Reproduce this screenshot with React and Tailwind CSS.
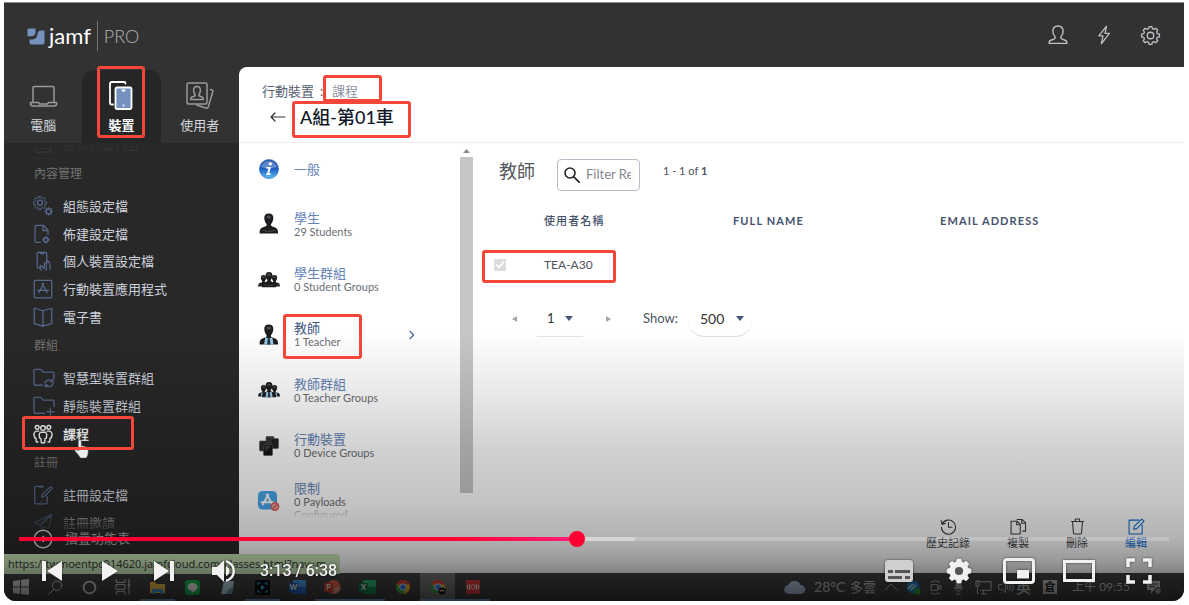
import React from "react";

const font = "font-[Lato,'Noto_Sans_CJK_TC',sans-serif]";

function Svg({ size = 20, w, h, box = "0 0 24 24", children, className = "", ...rest }) {
  return (
    <svg
      width={w || size}
      height={h || size}
      viewBox={box}
      fill="none"
      stroke="currentColor"
      strokeWidth="1.5"
      strokeLinecap="round"
      strokeLinejoin="round"
      aria-hidden="true"
      className={`shrink-0 ${className}`}
      {...rest}
    >
      {children}
    </svg>
  );
}

const gearPath =
  "M10.4 2.5h3.2l.5 2.4 1.9.8 2.1-1.3 2.2 2.2-1.3 2.1.8 1.9 2.4.5v3.2l-2.4.5-.8 1.9 1.3 2.1-2.2 2.2-2.1-1.3-1.9.8-.5 2.4h-3.2l-.5-2.4-1.9-.8-2.1 1.3-2.2-2.2L5 16.7l-.8-1.9-2.4-.5v-3.2l2.4-.5.8-1.9-1.3-2.1 2.2-2.2L8 5.7l1.9-.8z";

/* ---------- header icons ---------- */

const UserOutline = () => (
  <Svg size={22}>
    <path d="M8.6 13.6C7.2 12.3 6.4 10.4 6.4 8c0-3.4 2.200-5.800 5.600-5.800S17.600 4.600 17.600 8c0 2.400-.8 4.300-2.200 5.600-.6.700-.4 2 .6 2.500l4.300 1.900c.9.400 1.400 1.300 1.400 2.400v.8H2.300v-.8c0-1.100.5-2 1.400-2.400L8 16.100c1-.5 1.200-1.800.6-2.500z" />
  </Svg>
);
const Bolt = () => (
  <Svg size={20}>
    <path d="M15 1.500 5.800 13h5L8.800 22.500 18.500 10h-5.300z" />
  </Svg>
);
const Gear = ({ size = 21 }) => (
  <Svg size={size}>
    <path d={gearPath} transform="translate(0 -0.700)" />
    <circle cx="12" cy="12" r="3.700" />
  </Svg>
);

/* ---------- sidebar icons ---------- */

const Laptop = () => (
  <Svg w={29} h={24} box="0 0 29 24">
    <path d="M4 18V3.500Q4 2.500 5 2.500h19q1 0 1 1V18M1.500 18.500h8l1 1.500h8l1-1.500h8v1q0 2.500-2.500 2.500h-21q-2.500 0-2.500-2.500z" />
  </Svg>
);
const Devices = () => (
  <Svg w={24} h={30} box="0 0 24 30" strokeWidth="1.800">
    <path d="M4 23.500H2.500q-1.500 0-1.500-1.500V3q0-2 2-2h12q1.500 0 1.500 1.500" />
    <rect x="6.500" y="6.500" width="16" height="21.500" rx="1.500" fill="#7592bf" />
    <path d="M13.500 9.500h2M14.500 24.500v.1" />
  </Svg>
);
const Contacts = () => (
  <Svg w={28} h={28} box="0 0 28 28">
    <rect x="1" y="1" width="20" height="21" rx="1.500" />
    <path d="M9 12.500C7.800 11 7.600 9.500 7.600 8.300 7.600 6 9 4.500 11 4.500s3.400 1.500 3.400 3.800c0 1.200-.2 2.700-1.400 4.200v1.300l3.500 1.400q.8.500.8 2.300H4.700q0-1.800.8-2.300L9 13.800zM24.500 7.500l2 .8q.6.400.4 1.200L22 25.500q-.5 1-1.500.7L10.500 23" />
  </Svg>
);
const Gears = () => (
  <Svg size={20}>
    <path d={gearPath} transform="translate(-1 -1.500) scale(.78)" />
    <circle cx="8.400" cy="8" r="3" />
    <circle cx="18.800" cy="18.500" r="3" />
    <path d="M18.800 14v1.500M18.800 21.500V23M14.300 18.500h1.500M21.800 18.500h1.500M15.600 15.300l1.100 1.100M20.900 20.600l1.100 1.100M22 15.300l-1.100 1.100M16.700 20.600l-1.100 1.100" />
  </Svg>
);
const FileGear = () => (
  <Svg size={20}>
    <path d="M9 22H4Q2.500 22 2.500 20.500V3Q2.500 1.500 4 1.500h8.500L18 7.500V13M12 2v6h6" />
    <circle cx="15.500" cy="19" r="2.600" strokeWidth="2" />
    <path d="M15.500 15v1.400M15.500 21.600V23M11.500 19h1.400M18.100 19h1.400" />
  </Svg>
);
const PhoneHand = () => (
  <Svg size={20}>
    <path d="M9 20.500H6.500Q5 20.500 5 19V3q0-1.500 1.500-1.500h8.500q1.500 0 1.500 1.500v12M9 1.500v1.500h4V1.500M10 23l-1.500-4q-.3-1.500 1-1.500 1 0 2 2l2 1.500V15q1-2 2.500 0v8M16.500 10.500q3.500 3 4 6V22" />
  </Svg>
);
const AppBox = () => (
  <Svg size={20}>
    <rect x="1.500" y="1.500" width="21" height="21" rx="1.500" />
    <path d="m12.800 5.500-5.800 11M11 5.500l6 11M5.500 13.500h13" />
  </Svg>
);
const Book = () => (
  <Svg size={20}>
    <path d="M12 4.500 1.500 1.500v18.500L12 23l10.500-3V1.500zM12 4.500V23" />
  </Svg>
);
const FolderSync = () => (
  <Svg w={22} h={20} box="0 0 24 22">
    <path d="M10.500 19H2.500Q1 19 1 17.500V2.500Q1 1.500 2 1.500h6.500l2.500 3h10.500Q23 4.500 23 6v5.500M13 16.500q1-3.500 4.500-3.500 2 0 3.500 1.500M22 16.500q-.5 4-4.500 4-2 0-3.500-1.500M21.500 12.500v2.500H19M13.500 21v-2.500H16" />
  </Svg>
);
const FolderPlus = () => (
  <Svg w={22} h={20} box="0 0 24 22">
    <path d="M12.500 19H2.500Q1 19 1 17.500V2.500Q1 1.500 2 1.500h6.500l2.500 3h10.500Q23 4.500 23 6v5.500M19 13.500v7.500M15.300 17.300h7.500" />
  </Svg>
);
const Class = () => (
  <Svg w={20} h={20} strokeWidth="1.700">
    <circle cx="5" cy="4" r="2.300" />
    <circle cx="12" cy="4.800" r="2.800" />
    <circle cx="19" cy="4" r="2.300" />
    <path d="M7 8.500H4Q1.500 9 1 12l1 4.500 1.500.5.500 4.500h2M17 8.500h3q2.500.5 3 3.500l-1 4.500-1.500.5-.5 4.500h-2M9.500 9.800h5q2 .7 2 3.200l-.5 4-1.500.5-.5 5h-4l-.5-5L8 17l-.5-4q0-2.500 2-3.200z" />
  </Svg>
);
const TabletPen = () => (
  <Svg size={20}>
    <path d="M12.500 1.500H3.500Q2 1.500 2 3v18q0 1.500 1.500 1.500h12q1.500 0 1.500-1.500v-7M7.500 1.500v1h4v-1M9.500 19.500v.1M10.500 14.500l1-3.500L20.500 2.500q1.200-.6 2 .2.800.9.100 2L13.800 13.500z" />
  </Svg>
);
const Plane = () => (
  <Svg size={20}>
    <path d="M22.500 2 1.500 11.500l6 3zM22.500 2 9 15.500l9.500 3.500zM9 15.500v6l3.500-4.500" />
  </Svg>
);
const Collapse = () => (
  <Svg size={20} strokeWidth="1.800">
    <circle cx="12" cy="12" r="10.500" />
    <path d="m12.500 9-3 3 3 3" />
  </Svg>
);
const Tray = () => (
  <Svg size={20}>
    <path d="M3 12v7q0 1.500 1.500 1.500h15q1.500 0 1.500-1.500v-7M6 16h12" />
  </Svg>
);

/* ---------- class payload icons ---------- */

function Bust({ x = 0, y = 0, s = 1, tie }) {
  return (
    <g transform={`translate(${x} ${y}) scale(${s})`} stroke="none">
      <path d="M7.300 0c3.200 0 4.700 2 4.500 4.800-.1 2.500-1.200 4.700-2.300 5.700V12q.5 1 4.300 2 2.500.8 2.700 4v2H-1.900v-2q.2-3.200 2.700-4 3.800-1 4.300-2v-1.500C4 9.500 2.900 7.300 2.800 4.800 2.600 2 4.100 0 7.300 0z" fill="#1b1c1e" />
      <path d="M4.800 3Q7.300 1 9.800 3L9 5H5.600z" fill="#4a4c50" />
      {tie && <path d="m3.800 12.800 3.500 1.200 3.500-1.200L12 20H2.600z" fill="#9cc9e6" />}
      {tie && <path d="M6.300 13.800h2l.8 6.200H5.500z" fill="#22384d" />}
      {!tie && <path d="M1 17q6.300 2 12.600 0" stroke="#55575a" strokeWidth=".8" fill="none" />}
    </g>
  );
}
const InfoBall = () => (
  <Svg size={20} stroke="none">
    <defs>
      <linearGradient id="ball" x1="0" y1="0" x2="0" y2="1">
        <stop offset="0" stopColor="#2c55a8" />
        <stop offset=".5" stopColor="#1c5fc4" />
        <stop offset="1" stopColor="#62c3f7" />
      </linearGradient>
    </defs>
    <circle cx="12" cy="12" r="11.500" fill="url(#ball)" stroke="#3c6bb5" strokeWidth=".8" />
    <path d="M2.500 9.500a10 10 0 0 1 19 0q-9.500 3.500-19 0z" fill="#fff" opacity=".28" />
    <circle cx="13.600" cy="5.800" r="2" fill="#fff" />
    <path d="M9 9.500h5.300l-2 8h1.900l-.5 1.800H8.300l.5-1.800h.9l1.500-6.200H8.500z" fill="#fff" />
  </Svg>
);
const OneBust = ({ tie }) => (
  <Svg w={20} h={22} box="0 0 20 22">
    <Bust x={2.500} y={0.500} tie={tie} />
  </Svg>
);
const ThreeBusts = ({ tie }) => (
  <Svg w={22} h={18} box="0 0 22 18">
    <Bust x={1.300} y={4} s={0.580} tie={tie} />
    <Bust x={12.300} y={4} s={0.580} tie={tie} />
    <Bust x={5.500} y={1} s={0.760} tie={tie} />
  </Svg>
);
const Tablets = () => (
  <Svg w={20} h={20} box="0 0 20 20" strokeWidth=".6" stroke="#555">
    <rect x="7" y=".5" width="8" height="10" rx="1" fill="#333436" />
    <rect x="12" y="2.500" width="7.500" height="10" rx="1" fill="#222325" />
    <rect x=".5" y="5" width="8" height="10" rx="1" fill="#2b2c2e" />
    <rect x="4.500" y="8.500" width="9" height="11" rx="1" fill="#141517" />
    <path d="M5.500 9.500h7l-6 6.500z" fill="#3c3d40" stroke="none" />
  </Svg>
);
const Restrict = () => (
  <Svg w={22} h={20} box="0 0 22 20">
    <rect x="0" y="0" width="19" height="18.500" rx="4.500" fill="#46a6ec" stroke="none" />
    <path d="m10.300 3.500-5.500 10M8.700 3.500l5.800 10M3.500 11.200h12" stroke="#fff" strokeWidth="1.900" />
    <circle cx="17" cy="15.500" r="3.700" fill="#e9a0a0" stroke="#d95a5a" strokeWidth="1.500" />
    <path d="m14.800 17.500 4.400-4" stroke="#d95a5a" strokeWidth="1.400" />
  </Svg>
);

/* ---------- footer action icons ---------- */

const History = () => (
  <Svg size={17}>
    <path d="M3 8.500A10 10 0 1 1 2 13M1.500 3.500 2.800 9l5-1.500M12 6.500V13h5" />
  </Svg>
);
const Copy = () => (
  <Svg size={17}>
    <path d="M1.500 4.500h8.500l4.500 4.500v13.500h-13zM9.500 5v4.500H14M10 2h7l5 5v11.500h-4M16.500 2.500v5H22" />
  </Svg>
);
const Trash = () => (
  <Svg size={17}>
    <path d="M3.500 5h17M9 5V1.500h6V5M5 5l1.300 16.500q.2 1 1.200 1h9q1 0 1.200-1L19 5" />
  </Svg>
);
const Edit = () => (
  <Svg size={17}>
    <path d="M15 3H1.500v19.500H20V10M8 16l1-4.500L19.500 1.500l3.200 3L12.500 15z" />
  </Svg>
);

/* ---------- data ---------- */

const tabs = [
  { label: "電腦", icon: Laptop },
  { label: "裝置", icon: Devices, active: true },
  { label: "使用者", icon: Contacts },
];

const contentLinks = [
  { label: "組態設定檔", icon: Gears },
  { label: "佈建設定檔", icon: FileGear },
  { label: "個人裝置設定檔", icon: PhoneHand },
  { label: "行動裝置應用程式", icon: AppBox },
  { label: "電子書", icon: Book },
];
const groupLinks = [
  { label: "智慧型裝置群組", icon: FolderSync },
  { label: "靜態裝置群組", icon: FolderPlus },
  { label: "課程", icon: Class, active: true },
];

const payloads = [
  { label: "一般", icon: <InfoBall /> },
  { label: "學生", sub: "29 Students", icon: <OneBust /> },
  { label: "學生群組", sub: "0 Student Groups", icon: <ThreeBusts /> },
  { label: "教師", sub: "1 Teacher", icon: <OneBust tie />, active: true },
  { label: "教師群組", sub: "0 Teacher Groups", icon: <ThreeBusts tie /> },
  { label: "行動裝置", sub: "0 Device Groups", icon: <Tablets /> },
  { label: "限制", sub: "0 Payloads", more: "Configured", icon: <Restrict /> },
];

/* ---------- page parts ---------- */

function Header() {
  return (
    <header className="flex h-[65px] shrink-0 items-center justify-between border-t border-[#8a8a8a] bg-[#323232] pr-[23px] pl-[23px] text-[#bcbfc4]">
      <a href="#home" className="flex items-center pt-0.5 text-white">
        <svg width="18" height="17" viewBox="0 0 18 17" aria-hidden="true">
          <path d="M.500 2Q.500.500 2 .500h6.500v3.500q0 4-4 4.300H.500z" fill="#7592bf" />
          <path d="M17.500 2.500v12q0 2-2 2h-11Q2.500 16.500 2.500 14v-2.500H5q5-.3 5.500-5.500Q11 2.500 14 2.500z" fill="#7592bf" />
        </svg>
        <span className="ml-1 text-[22px] leading-7">jamf</span>
        <span className="mx-1.5 h-[30px] w-px bg-[#777]" />
        <span className="text-lg leading-7 font-light text-[#b4b4b4]">PRO</span>
      </a>
      <nav aria-label="帳號" className="flex items-center">
        <button aria-label="使用者" className="flex w-[46px] justify-center"><UserOutline /></button>
        <button aria-label="通知" className="flex w-[46px] justify-center"><Bolt /></button>
        <button aria-label="設定" className="ml-3.5 flex w-5 justify-end"><Gear /></button>
      </nav>
    </header>
  );
}

function SideLinks({ items }) {
  return items.map(({ label, icon: Icon, active }) => (
    <a
      key={label}
      href="#section"
      className={`flex min-h-0 flex-1 items-center gap-2.5 text-[13px] leading-5 ${active ? "font-bold text-white" : "text-[#cdd2dd]"}`}
    >
      <span className={`flex w-5 justify-start ${active ? "text-white" : "text-[#56688c]"}`}>
        <Icon />
      </span>
      {label}
    </a>
  ));
}

function SideHeading({ children }) {
  return <h3 className="flex h-[33px] items-center pb-1 pl-px text-[12px] text-[#737373]">{children}</h3>;
}

function Sidebar() {
  return (
    <aside className="flex w-[235px] shrink-0 flex-col bg-[#282828]">
      <nav aria-label="主要" className="flex h-[76px] bg-[#323232] pt-[3px]">
        {tabs.map(({ label, icon: Icon, active }) => (
          <a
            key={label}
            href="#tab"
            className={`flex flex-1 flex-col items-center pt-1.5 text-[13px] leading-5 ${active ? "rounded-t-xl bg-[#262626] font-bold text-white" : "text-[#d3d6dc]"}`}
          >
            <span className={`flex h-[39px] items-center ${active ? "text-white" : "text-[#9a9a9a]"}`}>
              <Icon />
            </span>
            {label}
          </a>
        ))}
      </nav>
      <nav aria-label="裝置" className="h-[386px] grow overflow-hidden px-[29px]">
        <div className="-mt-3 flex h-7 border-b border-[#2d2d2d] text-[#454545] [mask-image:linear-gradient(transparent_40%,black)]">
          <a href="#search" className="flex items-center gap-2.5 text-[13px]">
            <Tray />
            搜尋大量內容
          </a>
        </div>
        <SideHeading>內容管理</SideHeading>
        <div className="flex h-[139px] flex-col"><SideLinks items={contentLinks} /></div>
        <SideHeading>群組</SideHeading>
        <div className="flex h-[84px] flex-col"><SideLinks items={groupLinks} /></div>
        <SideHeading>註冊</SideHeading>
        <div className="flex h-14 flex-col">
          <SideLinks items={[{ label: "註冊設定檔", icon: TabletPen }]} />
          <a
            href="#invite"
            className="flex min-h-0 flex-1 items-center gap-2.5 text-[13px] leading-5 text-[#d3d8e2] [mask-image:linear-gradient(rgba(0,0,0,.7)_20%,rgba(0,0,0,.2)_75%)]"
          >
            <span className="text-[#56688c]"><Plane /></span>
            註冊邀請
          </a>
        </div>
      </nav>
      <button className="mb-6 flex h-5 shrink-0 items-center gap-3 px-[29px] text-[13px] text-[#a8a8a8]">
        <span className="text-[#d0d0d0]"><Collapse /></span>
        摺疊功能表
      </button>
    </aside>
  );
}

function PayloadList() {
  return (
    <div className="flex w-[234px] shrink-0">
      <ul className="-mt-0.5 flex h-[388px] flex-1 flex-col">
        {payloads.map(({ label, sub, more, icon, active }) => (
          <li key={label} className="min-h-0 flex-1">
            <a href="#payload" className="flex h-full items-center pr-[43px] pl-[18px]">
              <span className="flex w-6 shrink-0 justify-center">{icon}</span>
              <span className="ml-[13px] flex flex-1 flex-col">
                <span className={`text-[13px] leading-[14px] ${active ? "text-[#3d5480]" : "text-[#6583b5]"}`}>{label}</span>
                {sub && <span className="text-[11px] leading-[13px] text-[#6a6e73]">{sub}</span>}
                {more && (
                  <span className="text-[11px] leading-[13px] text-[#6a6e73] [mask-image:linear-gradient(rgba(0,0,0,.7),transparent_80%)]">{more}</span>
                )}
              </span>
              {active && (
                <Svg size={10} className="text-[#4d628c]" strokeWidth="2.800">
                  <path d="m7 3 9 9-9 9" />
                </Svg>
              )}
            </a>
          </li>
        ))}
      </ul>
      <div className="flex w-[13px] flex-col items-center pt-1.5">
        <svg width="7" height="4" viewBox="0 0 7 4" aria-hidden="true"><path d="M0 4 3.500 0 7 4z" fill="#8b8b8b" /></svg>
        <span className="mt-1 h-[336px] w-full bg-[#c6c6c6]" />
      </div>
    </div>
  );
}

const Caret = () => (
  <svg width="8" height="5" viewBox="0 0 8 5" className="pointer-events-none -ml-2 shrink-0" aria-hidden="true">
    <path d="M0 0h8L4 5z" fill="#45577c" />
  </svg>
);

function Detail() {
  return (
    <section className="min-w-0 flex-1 pt-4 pl-2 text-[#4d525b]">
      <div className="flex items-start pl-[18px]">
        <h2 className="text-[18px] leading-6 text-[#55585d]">教師</h2>
        <label className="ml-[22px] flex h-8 w-[83px] items-center rounded border border-[#b9bcc9] px-1.5">
          <Svg size={16} className="text-[#222]" strokeWidth="2.400">
            <circle cx="9" cy="9" r="7.500" />
            <path d="m14.500 14.500 8.500 8.500" />
          </Svg>
          <input
            aria-label="Filter Results"
            placeholder="Filter Results"
            className="mr-0.5 ml-1.5 w-0 min-w-0 flex-1 bg-transparent text-[13px] outline-none placeholder:text-[#85888e]"
          />
        </label>
        <span className="ml-[23px] text-[11px] leading-6">1 - 1 of <b>1</b></span>
      </div>
      <table className="mt-3.5 w-full table-fixed text-left">
        <thead>
          <tr className="h-8 text-[11px] tracking-widest text-[#45526e]">
            <th className="w-[63px]" aria-label="選取" />
            <th className="w-[189px] font-medium">使用者名稱</th>
            <th className="w-[207px]">FULL NAME</th>
            <th>EMAIL ADDRESS</th>
          </tr>
        </thead>
        <tbody>
          <tr className="h-14 text-[12px]">
            <td>
              <span className="relative ml-[13px] flex size-3">
                <input
                  type="checkbox"
                  defaultChecked
                  disabled
                  aria-label="TEA-A30"
                  className="size-3 appearance-none rounded-[1px] bg-[#dcdcdc]"
                />
                <Svg size={12} className="absolute inset-0 text-white" strokeWidth="3.500">
                  <path d="m5 12 5 5L19 6" />
                </Svg>
              </span>
            </td>
            <td>TEA-A30</td>
            <td />
            <td />
          </tr>
        </tbody>
      </table>
      <div className="mt-2 flex h-9 items-center pl-[31px] text-[12px]">
        <button aria-label="上一頁">
          <svg width="5" height="6" viewBox="0 0 5 6"><path d="M5 0v6L0 3z" fill="#a5a5a5" /></svg>
        </button>
        <span className="ml-5 flex h-full w-[46px] items-center border-b border-[#e4e4e8] pl-[10px]">
          <select aria-label="頁" className="w-[26px] appearance-none bg-transparent text-[13px] text-[#333] outline-none">
            <option>1</option>
          </select>
          <Caret />
        </span>
        <button aria-label="下一頁" className="ml-[23px]">
          <svg width="5" height="6" viewBox="0 0 5 6"><path d="M0 0v6l5-3z" fill="#a5a5a5" /></svg>
        </button>
        <label htmlFor="page-size" className="ml-8 text-[13px]">Show:</label>
        <span className="ml-2.5 flex h-full w-[64px] items-center rounded-2xl border-b border-[#dedee2] pl-3">
          <select id="page-size" className="w-11 appearance-none bg-transparent text-[14px] text-[#333] outline-none">
            <option>500</option>
          </select>
          <Caret />
        </span>
      </div>
    </section>
  );
}

function Main() {
  const actions = [
    ["歷史記錄", History],
    ["複製", Copy],
    ["刪除", Trash],
    ["編輯", Edit],
  ];
  return (
    <main className="flex min-w-0 flex-1 flex-col rounded-tl-lg bg-white">
      <div className="h-[76px] shrink-0 border-b border-[#ececf0] pt-[15px] pl-[23px]">
        <nav aria-label="路徑" className="flex text-[13px] leading-[18px] text-[#55606f]">
          <a href="#devices">行動裝置</a>
          <span className="w-[18px] pl-1.5">:</span>
          <a href="#classes" className="text-[#8b94a4]">課程</a>
        </nav>
        <div className="flex items-center pl-2">
          <button aria-label="返回" className="text-[#333]">
            <Svg w={16} h={10} box="0 0 16 10" strokeWidth="1.200">
              <path d="M15 5H1M5 1 1 5l4 4" />
            </Svg>
          </button>
          <h1 className="ml-3.5 text-[18px] leading-[34px] font-medium text-[#111827]">A組-第01車</h1>
        </div>
      </div>
      <div className="flex h-[375px] grow overflow-hidden">
        <PayloadList />
        <Detail />
      </div>
      <div className="flex shrink-0 justify-end gap-[37px] pr-[37px] pb-[22px]">
        {actions.map(([label, Icon]) => (
          <button
            key={label}
            className={`flex flex-col items-center text-[11px] leading-4 ${label === "編輯" ? "text-[#0b6fd6]" : "text-[#3c3c3c]"}`}
          >
            <Icon />
            {label}
          </button>
        ))}
      </div>
    </main>
  );
}

/* ---------- desktop task bar ---------- */

const OfficeIcon = ({ letter, dark, mid, light, round }) => (
  <svg width="17" height="16" viewBox="0 0 17 16" aria-hidden="true">
    {round ? <circle cx="9.500" cy="8" r="7" fill={light} /> : <rect x="4" y="1" width="13" height="14" rx="1" fill={light} />}
    {round ? <path d="M9.500 8h7a7 7 0 0 1-7 7z" fill={mid} /> : <rect x="4" y="8" width="13" height="7" rx="1" fill={mid} />}
    <rect x="0" y="4" width="9" height="9" rx="1" fill={dark} />
    <text x="4.500" y="11" fontSize="7.500" fontWeight="bold" fill="#fff" textAnchor="middle" fontFamily="Lato">{letter}</text>
  </svg>
);
const Chrome = ({ badge }) => (
  <svg width="16" height="16" viewBox="0 0 16 16" aria-hidden="true">
    <circle cx="8" cy="8" r="7" fill="#fbc116" />
    <path d="M8 8 1.900 4.500A7 7 0 0 1 14.100 4.500L14.600 5.500H8z" fill="#ea4335" />
    <path d="M1.900 4.500A7 7 0 0 0 8 15l3-5.500H5.300z" fill="#34a853" />
    <circle cx="8" cy="8" r="3.600" fill="#fff" />
    <circle cx="8" cy="8" r="2.800" fill="#4285f4" />
    {badge && <g><circle cx="12" cy="12" r="3.500" fill="#111" /><path d="M10 12.500q2-2.500 4 0" stroke="#e8c9a0" strokeWidth="1.500" fill="none" /></g>}
  </svg>
);

const apps = [
  {
    name: "Explorer",
    open: true,
    icon: <svg width="15" height="13" viewBox="0 0 15 13"><path d="M0 1h5l1.500 2H15v9H0z" fill="#f6c648" /><path d="M2 8h11v5h-3v-2H5v2H2z" fill="#4a9be0" /></svg>,
  },
  {
    name: "LINE",
    icon: <svg width="15" height="15" viewBox="0 0 15 15"><rect width="15" height="15" rx="3.500" fill="#14c651" /><path d="M7.500 3C4.500 3 2.500 4.700 2.500 7s2 3.600 4.300 3.900V13c2.600-1.500 5.700-3.300 5.700-6 0-2.300-2-4-5-4z" fill="#fff" /></svg>,
  },
  {
    name: "Notepad",
    icon: <svg width="15" height="15" viewBox="0 0 15 15"><path d="M4 1h10l-2.500 13H1z" fill="#bfe3ee" /><path d="m9 9 5-2-2.500 7H6z" fill="#6aa5b8" /></svg>,
  },
  {
    name: "Capture",
    open: true,
    icon: <svg width="15" height="15" viewBox="0 0 15 15"><rect width="15" height="15" rx="2" fill="#0a0a0a" /><path d="M3 5V3h2.500M9.500 3H12v2M12 10v2H9.500M5.500 12H3v-2" stroke="#37b5f4" strokeWidth="1.200" fill="none" /><path d="m6 5 4 2.500L6 10z" fill="#37b5f4" /></svg>,
  },
  { name: "Word", icon: <OfficeIcon letter="W" dark="#1d5cc0" mid="#2a6cd0" light="#49a5f0" /> },
  { name: "PowerPoint", open: true, icon: <OfficeIcon letter="P" dark="#d0482a" mid="#f29a80" light="#ee6c4a" round /> },
  { name: "Excel", open: true, icon: <OfficeIcon letter="X" dark="#118048" mid="#1c8f56" light="#2fbf7c" /> },
  { name: "Chrome", icon: <Chrome /> },
  { name: "Chrome profile", open: true, active: true, icon: <Chrome badge /> },
  {
    name: "Recorder",
    open: true,
    icon: <svg width="14" height="14" viewBox="0 0 14 14"><rect width="14" height="14" fill="#e8403a" /><path d="M1.500 5v4M3.500 4v6M12.500 5v4M10.500 4v6" stroke="#fff" /><circle cx="7" cy="7" r="2.200" stroke="#fff" fill="none" strokeWidth=".8" /></svg>,
  },
];

function Taskbar() {
  const sys = "flex h-full w-[34px] items-center justify-center text-[#d8d8d8]";
  return (
    <footer className="flex h-7 shrink-0 items-center justify-between bg-[#444] pr-1 text-[#c9c9c9]">
      <div className="flex h-full items-center">
        <button aria-label="開始" className={sys}>
          <svg width="16" height="16" viewBox="0 0 16 16" fill="#d8d8d8"><path d="m0 2 7-1v6.500H0zM8 1l8-1v7.500H8zM0 8.500h7V15l-7-1zM8 8.500h8V16l-8-1z" /></svg>
        </button>
        <button aria-label="搜尋" className={sys}><Svg size={15}><circle cx="14.500" cy="9" r="7.500" /><path d="M9 15 1 23" /></Svg></button>
        <button aria-label="Cortana" className={sys}><Svg size={15} strokeWidth="3"><circle cx="12" cy="12" r="9.500" /></Svg></button>
        <button aria-label="工作檢視" className={sys}><Svg size={16}><path d="M2 1v4h13V1M2 8.500h13v7H2zM2 23v-4h13v4M21 1v22M19.500 9h3" /></Svg></button>
        {apps.map(({ name, icon, open, active }) => (
          <button
            key={name}
            aria-label={name}
            className={`flex h-full w-[35px] items-center justify-center ${active ? "bg-[#777]" : ""} ${open ? "shadow-[inset_0_-2px_0_#7fb2e5]" : ""}`}
          >
            {icon}
          </button>
        ))}
      </div>
      <div className="flex items-center text-[13px] leading-6">
        <svg width="22" height="15" viewBox="0 0 22 15" className="mr-2" aria-hidden="true">
          <path d="M5 14a4.500 4.500 0 0 1-.5-9A6.500 6.500 0 0 1 16.500 5 4.500 4.500 0 0 1 17 14z" fill="#b9cdea" />
        </svg>
        <span className="w-9 text-[14px] whitespace-nowrap">28°C</span>
        <span className="mr-2 text-[13px]">多雲</span>
        <Svg size={14}><path d="m2 17 10-10 10 10" /></Svg>
        <svg width="15" height="15" viewBox="0 0 15 15" className="ml-2" aria-hidden="true">
          <circle cx="7" cy="7" r="6.500" fill="#2684c8" />
          <path d="m2 9 5-5M5 10l5-5" stroke="#d5ecfa" strokeWidth="1.500" />
          <rect x="8.500" y="8.500" width="6" height="6" rx="1" fill="#34a838" />
        </svg>
        <Svg size={15} className="ml-2"><path d="M4 3Q10-1 17 3M4 21q6 4 13 0M4 7.500h10v9H4zM14 11l5-2.500v7L14 13" /></Svg>
        <svg width="9" height="15" viewBox="0 0 9 15" className="ml-2.5" aria-hidden="true">
          <rect x="1.500" y="0" width="6" height="9" rx="1" fill="#aaa" /><path d="M.5 7q0 4 4 4t4-4M4.500 11v3.500M2 14.500h5" stroke="#aaa" fill="none" />
        </svg>
        <Svg size={17} className="ml-3"><path d="M6 4h16.500v12H8M12 16v5M9 21h7M1.500 3h4v7h-4zM3.500 10v11" /></Svg>
        <Svg size={16} className="ml-1.5"><path d="M1.500 8.500H6l5-5v17l-5-5H1.500zM14 9q2 3 0 6M17 6.500q4 5.500 0 11M20 4q6 8 0 16" /></Svg>
        <span className="ml-0.5 text-[15px] font-medium">英</span>
        <span className="ml-3 flex size-[14px] items-center justify-center bg-[#c9c9c9] text-[11px] font-bold text-[#222]">倉</span>
        <time className="ml-[15px] text-[12px] whitespace-nowrap">上午 09:55</time>
        <svg width="16" height="15" viewBox="0 0 16 15" className="mr-[18px] ml-4" aria-hidden="true">
          <path d="M1 1h13v9H8l-3 4v-4H1z" fill="#c9c9c9" /><path d="M3 4h9M3 6.500h6" stroke="#444" />
          <circle cx="12" cy="11" r="3.500" fill="#999" stroke="#444" />
        </svg>
      </div>
    </footer>
  );
}

/* ---------- video player ---------- */

function Player() {
  const right = "flex w-[60px] items-center justify-center";
  return (
    <div className="absolute inset-x-0 bottom-0 z-20 flex flex-col">
      <input
        type="range"
        min="0"
        max="398"
        defaultValue="193"
        aria-label="播放進度"
        className="mx-[15px] h-1 appearance-none bg-[linear-gradient(to_right,#ff0033_0,#ff0033_38%,#ff1f7a_48.500%,rgba(255,255,255,.45)_48.500%,rgba(255,255,255,.45)_53.600%,rgba(255,255,255,.2)_53.600%)] [&::-webkit-slider-thumb]:size-4 [&::-webkit-slider-thumb]:appearance-none [&::-webkit-slider-thumb]:rounded-full [&::-webkit-slider-thumb]:bg-[#ff0033]"
      />
      <div className="flex h-[60px] items-center justify-between pr-[15px] pl-[37px] text-[#f1f1f1] drop-shadow-[0_0_1px_rgba(0,0,0,.6)]">
        <div className="flex items-center">
          <button aria-label="上一部"><svg width="22" height="20" viewBox="0 0 22 20" fill="currentColor"><path d="M1 0h4v20H1zM21 0v20L6 10z" /></svg></button>
          <button aria-label="播放" className="ml-[38px]"><svg width="18" height="20" viewBox="0 0 18 20" fill="currentColor"><path d="M1 0v20l16-10z" /></svg></button>
          <button aria-label="下一部" className="ml-[34px]"><svg width="22" height="20" viewBox="0 0 22 20" fill="currentColor"><path d="M1 0v20l15-10zM17 0h4v20h-4z" /></svg></button>
          <button aria-label="靜音" className="ml-[37px]">
            <svg width="24" height="24" viewBox="0 0 24 24" fill="currentColor">
              <path d="M0 8h5l7-7v22l-7-7H0zM14 7q3.500 1.500 3.500 5T14 17zM14 1q9 2.500 9 11t-9 11v-2.500q6.500-2 6.500-8.500T14 3.500z" />
            </svg>
          </button>
          <span className="ml-6 font-[Roboto,sans-serif] text-[16px] leading-6 font-medium">3:13 / 6:38</span>
        </div>
        <div className="flex items-center">
          <button aria-label="字幕" className={right}>
            <svg width="28" height="22" viewBox="0 0 28 22"><rect width="28" height="22" rx="3" fill="#cfcfcf" /><path d="M3 11.500h5M10 11.500h15M3 17.500h14M20 17.500h5" stroke="#555" strokeWidth="2.800" /></svg>
          </button>
          <button aria-label="播放器設定" className={right}>
            <svg width="28" height="28" viewBox="0 0 24 24"><path d={gearPath} transform="translate(0 -0.700)" fill="currentColor" stroke="currentColor" strokeWidth=".8" strokeLinejoin="round" /><circle cx="12" cy="12" r="3.500" fill="#555" /></svg>
          </button>
          <button aria-label="迷你播放器" className={right}>
            <svg width="32" height="26" viewBox="0 0 32 26"><rect x="1.500" y="1.500" width="29" height="23" rx="2.500" fill="none" stroke="currentColor" strokeWidth="3" /><path d="M14 12h12v8.500H14z" fill="currentColor" /></svg>
          </button>
          <button aria-label="劇院模式" className={right}>
            <svg width="32" height="22" viewBox="0 0 32 22"><rect x="1.500" y="1.500" width="29" height="19" fill="none" stroke="currentColor" strokeWidth="3" /></svg>
          </button>
          <button aria-label="全螢幕" className={right}>
            <svg width="26" height="26" viewBox="0 0 26 26" fill="none" stroke="currentColor" strokeWidth="3.500"><path d="M2 9V2h7M17 2h7v7M24 17v7h-7M9 24H2v-7" /></svg>
          </button>
        </div>
      </div>
    </div>
  );
}

/* Highlight frames drawn over the video */
const marks = [
  "left-[93px] top-[64px] h-[72px] w-[48px]",
  "left-[319px] top-[73px] h-[27px] w-[59px]",
  "left-[288px] top-[99px] h-[37px] w-[119px]",
  "left-[18px] top-[414px] h-[34px] w-[112px]",
  "left-[279px] top-[312px] h-[45px] w-[79px]",
  "left-[478px] top-[248px] h-[33px] w-[134px]",
];

export default function App() {
  return (
    <div className={`flex min-h-screen flex-col bg-white pt-0.5 pr-[5px] pb-1 pl-1 ${font}`}>
      <div className="relative flex flex-1 flex-col overflow-hidden rounded-b-xl bg-[#323232]">
        <Header />
        <div className="flex flex-1">
          <Sidebar />
          <Main />
        </div>
        <Taskbar />
        <div className="absolute bottom-[27px] left-0 w-[336px] rounded-tr-sm bg-[#cdeabb] pl-1 font-['Open_Sans',sans-serif] text-[11px] leading-5 whitespace-nowrap text-[#333]">
          https://twmoentpc014620.jamfcloud.com/classes.html?nav=m
        </div>
        <div className="pointer-events-none absolute inset-x-0 bottom-0 z-10 h-[270px] bg-[linear-gradient(transparent,rgba(0,0,0,.1)_26%,rgba(0,0,0,.18)_44%,rgba(0,0,0,.24)_64%,rgba(0,0,0,.3)_77%,rgba(0,0,0,.4)_85%,rgba(0,0,0,.5)_90%,rgba(0,0,0,.7))]" />
        <Player />
        <svg width="15" height="20" viewBox="0 0 15 20" className="absolute top-[437px] left-[70px] z-20" aria-hidden="true">
          <path d="M5 1q1.700-1 2.300 1v5q1-.8 2 .3 1.200-.6 2 .6 1.500-.6 2.200.8.900 1.500.7 5-.3 3-2 5.300H6.500Q4.500 16 1 12q-.8-1.500.5-1.800Q3 10 4.300 12V2z" fill="#eee" stroke="#555" strokeWidth=".5" />
          <path d="M7.300 7v3.500M9.300 7.500v3M11.300 8.300v2.500" stroke="#777" strokeWidth=".6" />
        </svg>
        {marks.map((place) => (
          <span key={place} className={`pointer-events-none absolute z-30 rounded-[3px] border-3 border-[#f4473a] ${place}`} />
        ))}
      </div>
    </div>
  );
}
